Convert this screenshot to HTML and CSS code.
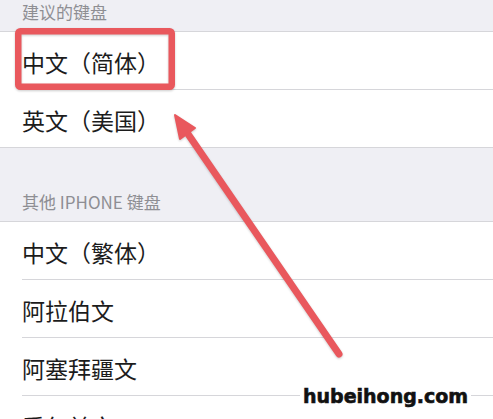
FILE: index.html
```html
<!DOCTYPE html>
<html lang="zh-CN">
<head>
    <meta charset="UTF-8" />
    <meta name="viewport" content="width=device-width, initial-scale=1" />
    <title>键盘</title>
    <link rel="stylesheet" href="styles.css">
</head>
<body>
<div class="tela">
    <div class="grupo-titulo grupo-topo">建议的键盘</div>
    <ul class="lista">
        <li class="item">中文（简体）</li>
        <li class="item item-fim">英文（美国）</li>
    </ul>

    <div class="grupo-titulo grupo-meio">其他 IPHONE 键盘</div>
    <ul class="lista">
        <li class="item">中文（繁体）</li>
        <li class="item">阿拉伯文</li>
        <li class="item">阿塞拜疆文</li>
        <li class="item">爱尔兰文</li>
    </ul>

    <!-- marcação por cima da captura -->
    <svg class="anotacao" width="493" height="419" viewBox="0 0 493 419">
        <rect x="18.25" y="31.25" width="153.5" height="55.5" rx="2" fill="none" stroke="#e9585d" stroke-width="6.5" />
        <line x1="339" y1="354" x2="188" y2="134" stroke="#e9585d" stroke-width="7" stroke-linecap="round" />
        <polygon points="175,115 195,128 180,139" fill="#e9585d" stroke="#e9585d" stroke-width="2" stroke-linejoin="round" />
    </svg>

    <div class="marca">hubeihong.com</div>
</div>
</body>
</html>
```

FILE: styles.css
```css
:root {
    --cor-fundo: #fff;
    --cor-grupo: #efeff4;
    --cor-linha: #d6d6da;
    --cor-texto: #1c1c1c;
    --cor-texto-secundario: #8e8e93;
}

html, body {
    margin: 0;
    padding: 0;
    background: var(--cor-fundo);
    font-family: "Noto Sans CJK SC", "Noto Sans", sans-serif;
}

.tela {
    position: relative;
    width: 493px;
    height: 419px;
    overflow: hidden;
}

.grupo-titulo {
    background: var(--cor-grupo);
    color: var(--cor-texto-secundario);
    font-size: 17px;
    padding-left: 22px;
    box-sizing: border-box;
    border-bottom: 1px solid var(--cor-linha);
    display: flex;
    align-items: flex-end;
}

.grupo-topo {
    height: 32px;
    padding-bottom: 7px;
}

.grupo-meio {
    height: 74px;
    padding-bottom: 7px;
}

.lista {
    list-style: none;
    margin: 0;
    padding: 0;
}

.item {
    height: 58px;
    box-sizing: border-box;
    display: flex;
    align-items: center;
    margin-left: 22px;
    border-bottom: 1px solid var(--cor-linha);
    color: var(--cor-texto);
    font-size: 23px;
    padding-top: 2px;
}

.item-fim {
    margin-left: 0;
    padding-left: 22px;
}

.anotacao {
    position: absolute;
    top: 0;
    left: 0;
    pointer-events: none;
    filter: drop-shadow(0 1px 1px rgba(0, 0, 0, 0.2));
}

.marca {
    position: absolute;
    left: 300px;
    top: 383px;
    padding: 0 3px;
    background: var(--cor-fundo);
    font-family: "DejaVu Sans", sans-serif;
    font-weight: 700;
    font-size: 19px;
    line-height: 26px;
    color: #111;
    -webkit-text-stroke: 0.6px #111;
}
```
